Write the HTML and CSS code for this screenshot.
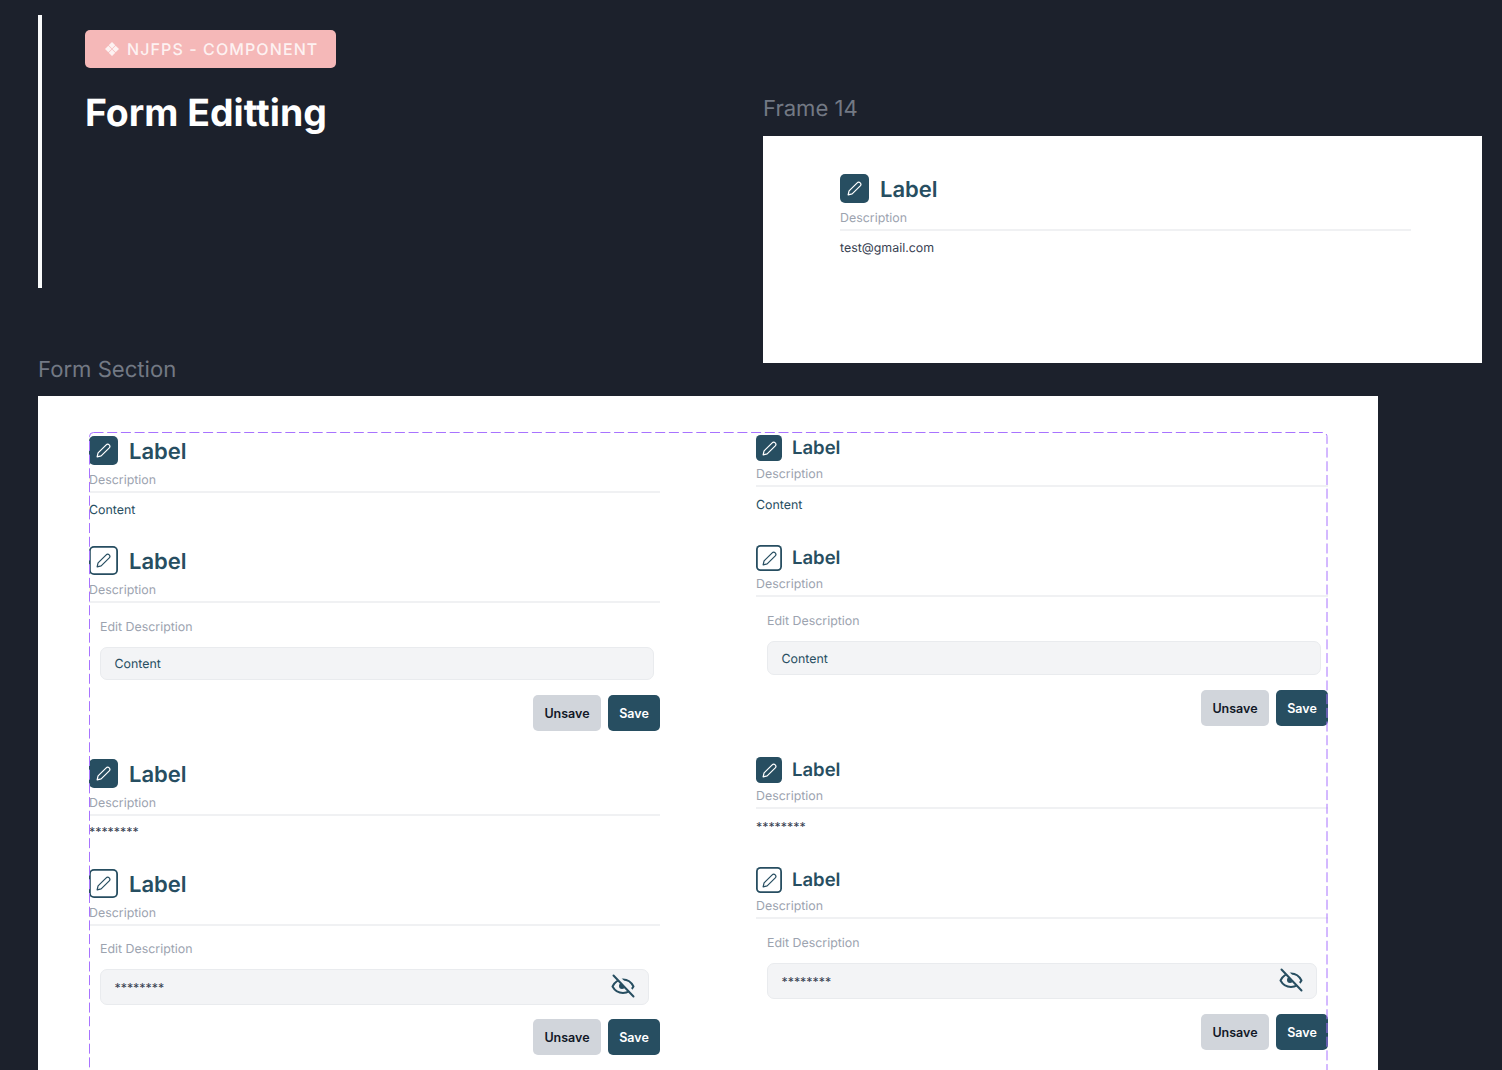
FILE: index.html
```html
<!DOCTYPE html>
<html lang="en">
<head>
<meta charset="utf-8">
<title>Form Editting</title>
<link rel="stylesheet" href="styles.css">
</head>
<body>
<svg class="sprites" width="0" height="0" aria-hidden="true">
  <symbol id="pen" viewBox="0 0 16 16">
    <path d="M1.2 14.8 2.2 10.6 10.6 2.2C11.7 1.1 13.2 1.1 14.1 2 15 2.9 15 4.4 13.900 5.500L5.500 13.800Z" fill="none" stroke="currentColor" stroke-width="1.300" stroke-linejoin="round"/>
  </symbol>
  <symbol id="eye-off" viewBox="0 0 24 24">
    <path d="M1.500 12.500C4 7.500 8 5.500 12 5.500s8 2 10.500 7C20 17 16 19 12 19S4 17 1.500 12.500Z" fill="none" stroke="currentColor" stroke-width="2" stroke-linejoin="round"/>
    <circle cx="11" cy="12" r="3" fill="currentColor"/>
    <path d="M2.500 1.500 22.500 22.500" stroke="#f3f4f6" stroke-width="4.500" transform="translate(1.200 -1.200)"/>
    <path d="M2.500 1.500 22.500 22.500" stroke="currentColor" stroke-width="2" stroke-linecap="round"/>
  </symbol>
</svg>

<header class="top">
  <div class="top-left">
    <div class="intro">
      <div class="badge">
        <svg class="badge-icon" viewBox="0 0 14 14" aria-hidden="true"><path d="M7 0 10.300 3.300 7 6.600 3.700 3.300ZM3.300 3.700 6.600 7 3.300 10.300 0 7ZM10.700 3.700 14 7 10.700 10.300 7.400 7ZM7 7.400 10.300 10.700 7 14 3.700 10.700Z" fill="currentColor"/></svg>
        <span>NJFPS - COMPONENT</span>
      </div>
      <h1 class="title">Form Editting</h1>
    </div>
    <h2 class="frame-name frame-name-form">Form Section</h2>
  </div>
  <div class="top-right">
    <h2 class="frame-name">Frame 14</h2>
    <div class="sample">
      <div class="field field-lg sample-field">
        <div class="field-head">
          <span class="pen pen-solid"><svg class="pen-icon"><use href="#pen"/></svg></span>
          <span class="field-label">Label</span>
        </div>
        <div class="field-desc">Description</div>
        <div class="field-value value-mail">test@gmail.com</div>
      </div>
    </div>
  </div>
</header>

<main class="form-frame">
  <div class="variants">
    <svg class="dash" aria-hidden="true"><rect x="0.5" y="0.5" width="1237.500" height="900" rx="4"/></svg>

    <section class="col col-lg">
      <div class="field field-lg">
        <div class="field-head">
          <span class="pen pen-solid"><svg class="pen-icon"><use href="#pen"/></svg></span>
          <span class="field-label">Label</span>
        </div>
        <div class="field-desc">Description</div>
        <div class="field-value">Content</div>
      </div>

      <div class="field field-lg">
        <div class="field-head">
          <span class="pen pen-outline"><svg class="pen-icon"><use href="#pen"/></svg></span>
          <span class="field-label">Label</span>
        </div>
        <div class="field-desc">Description</div>
        <div class="edit">
          <div class="edit-label">Edit Description</div>
          <div class="input input-text"><span class="input-value">Content</span></div>
        </div>
        <div class="actions">
          <button class="btn btn-muted">Unsave</button>
          <button class="btn btn-primary">Save</button>
        </div>
      </div>

      <div class="field field-lg">
        <div class="field-head">
          <span class="pen pen-solid"><svg class="pen-icon"><use href="#pen"/></svg></span>
          <span class="field-label">Label</span>
        </div>
        <div class="field-desc">Description</div>
        <div class="field-value value-secret">********</div>
      </div>

      <div class="field field-lg">
        <div class="field-head">
          <span class="pen pen-outline"><svg class="pen-icon"><use href="#pen"/></svg></span>
          <span class="field-label">Label</span>
        </div>
        <div class="field-desc">Description</div>
        <div class="edit edit-tight">
          <div class="edit-label">Edit Description</div>
          <div class="input input-secret"><span class="input-value">********</span><svg class="eye"><use href="#eye-off"/></svg></div>
        </div>
        <div class="actions">
          <button class="btn btn-muted">Unsave</button>
          <button class="btn btn-primary">Save</button>
        </div>
      </div>
    </section>

    <section class="col col-sm">
      <div class="field field-sm">
        <div class="field-head">
          <span class="pen pen-solid"><svg class="pen-icon"><use href="#pen"/></svg></span>
          <span class="field-label">Label</span>
        </div>
        <div class="field-desc">Description</div>
        <div class="field-value">Content</div>
      </div>

      <div class="field field-sm">
        <div class="field-head">
          <span class="pen pen-outline"><svg class="pen-icon"><use href="#pen"/></svg></span>
          <span class="field-label">Label</span>
        </div>
        <div class="field-desc">Description</div>
        <div class="edit">
          <div class="edit-label">Edit Description</div>
          <div class="input input-text"><span class="input-value">Content</span></div>
        </div>
        <div class="actions">
          <button class="btn btn-muted">Unsave</button>
          <button class="btn btn-primary">Save</button>
        </div>
      </div>

      <div class="field field-sm">
        <div class="field-head">
          <span class="pen pen-solid"><svg class="pen-icon"><use href="#pen"/></svg></span>
          <span class="field-label">Label</span>
        </div>
        <div class="field-desc">Description</div>
        <div class="field-value value-secret">********</div>
      </div>

      <div class="field field-sm">
        <div class="field-head">
          <span class="pen pen-outline"><svg class="pen-icon"><use href="#pen"/></svg></span>
          <span class="field-label">Label</span>
        </div>
        <div class="field-desc">Description</div>
        <div class="edit">
          <div class="edit-label">Edit Description</div>
          <div class="input input-secret"><span class="input-value">********</span><svg class="eye"><use href="#eye-off"/></svg></div>
        </div>
        <div class="actions">
          <button class="btn btn-muted">Unsave</button>
          <button class="btn btn-primary">Save</button>
        </div>
      </div>
    </section>
  </div>
</main>
</body>
</html>
```
FILE: styles.css
```css
* { box-sizing: border-box; }

html, body {
  margin: 0;
  height: 1070px;
  overflow: hidden;
  background: #1c212c;
}

body {
  font-family: Inter, "Liberation Sans", sans-serif;
  color: #274e61;
  text-rendering: geometricPrecision;
}

.sprites { display: block; height: 0; }

/* Top area */
.top {
  display: flex;
  height: 396px;
  padding-left: 38px;
}

.top-left { width: 725px; flex: none; }

.intro {
  margin-top: 15px;
  height: 273px;
  padding: 15px 0 0 43px;
  border-left: 4px solid #f9fafb;
}

.badge {
  display: inline-flex;
  align-items: center;
  gap: 8px;
  width: 251px;
  height: 38px;
  padding-left: 20px;
  border-radius: 5px;
  background: #f5b8b8;
  color: #fdf2f2;
  font-size: 16px;
  font-weight: 500;
  letter-spacing: 1.100px;
}

.badge-icon { width: 14px; height: 14px; flex: none; }

.title {
  margin: 22px 0 0;
  color: #fff;
  font-size: 37.400px;
  line-height: 48px;
  font-weight: 700;
}

.frame-name {
  height: 28px;
  margin: 0;
  padding-top: 1px;
  color: #737984;
  font-size: 22.100px;
  line-height: 28px;
  font-weight: 400;
}

.frame-name-form { margin-top: 67px; }

.top-right { padding-top: 94px; }

.sample {
  width: 719px;
  height: 227px;
  margin-top: 14px;
  padding: 38px 0 0 77px;
  background: #fff;
}

.sample-field { width: 571px; }

/* Form frame */
.form-frame {
  width: 1340px;
  height: 674px;
  margin-left: 38px;
  padding: 36px 0 0 51px;
  background: #fff;
  overflow: hidden;
}

.variants {
  position: relative;
  display: grid;
  grid-template-columns: 571px 572px;
  column-gap: 96px;
  width: 1239px;
  padding-top: 3px;
}

.dash {
  position: absolute;
  top: 0;
  left: 0;
  width: 1239px;
  height: 902px;
  z-index: 2;
  pointer-events: none;
}

.dash rect {
  fill: none;
  stroke: #a873ff;
  stroke-width: 1;
  stroke-dasharray: 10 3.7;
}

.col { display: flex; flex-direction: column; }
.col-lg { padding-top: 1px; }

/* Field */
.field-head { display: flex; align-items: center; }

.field-lg .field-head { height: 29px; gap: 11px; }
.field-sm .field-head { height: 26px; gap: 10px; }

.field-label {
  color: #274e61;
  font-weight: 600;
}

.field-lg .field-label { padding-top: 2px; font-size: 22px; }
.field-sm .field-label { font-size: 18.500px; }

.pen {
  display: flex;
  align-items: center;
  justify-content: center;
  flex: none;
  color: #fff;
}

.field-lg .pen { width: 29px; height: 29px; border-radius: 5px; }
.field-sm .pen { width: 26px; height: 26px; border-radius: 4.500px; }

.pen-solid { background: #274e61; color: #fff; }
.pen-outline { box-shadow: inset 0 0 0 1.800px #274e61; color: #274e61; background: #fff; }

.pen-icon { width: 15px; height: 15px; }

.field-desc {
  height: 23px;
  border-bottom: 2px solid #f0f1f3;
  color: #9ca3af;
  font-size: 12.400px;
  line-height: 20px;
}

.field-lg .field-desc { margin-top: 5px; }
.field-sm .field-desc { margin-top: 3px; }

.field-value {
  height: 20px;
  color: #274e61;
  font-size: 12.400px;
  line-height: 20px;
}

.field-lg .field-value { margin-top: 7px; }
.field-sm .field-value { margin-top: 8px; }

.value-mail { color: #374151; }
.value-secret { color: #374151; }
.field-lg .value-secret { margin-top: 6px; height: 21px; }

.col-lg .field + .field { margin-top: 26px; }
.col-sm .field + .field { margin-top: 30px; }
.col-lg .field:nth-child(2) + .field { margin-top: 28px; }
.col-sm .field:nth-child(2) + .field { margin-top: 31px; }

.edit { padding: 14px 0 0 11px; }
.edit-tight { padding-top: 13px; margin-bottom: -1px; }

.edit-label {
  height: 20px;
  color: #9ca3af;
  font-size: 12.400px;
  line-height: 20px;
}

.input {
  display: flex;
  align-items: center;
  justify-content: space-between;
  margin-top: 10px;
  padding: 0 13px 0 13.500px;
  border: 1px solid #e9ebee;
  border-radius: 7px;
  background: #f3f4f6;
  color: #274e61;
  font-size: 12.400px;
}

.input-text { margin-right: 6px; }
.field-sm .input-text { margin-right: 7px; }
.field-lg .input-text { height: 33px; }
.field-sm .input-text { height: 34px; }
.input-secret { height: 36px; margin-right: 11px; color: #374151; }

.eye { width: 24px; height: 24px; margin-top: -2px; color: #274e61; }

.actions {
  display: flex;
  justify-content: flex-end;
  gap: 7px;
  margin-top: 15px;
}

.btn {
  height: 36px;
  padding: 0;
  border: 0;
  border-radius: 5px;
  font-family: inherit;
  font-size: 12.500px;
  font-weight: 600;
}

.btn-muted { width: 68px; background: #d1d5db; color: #111827; }
.btn-primary { width: 52px; background: #274e61; color: #fff; }
```
